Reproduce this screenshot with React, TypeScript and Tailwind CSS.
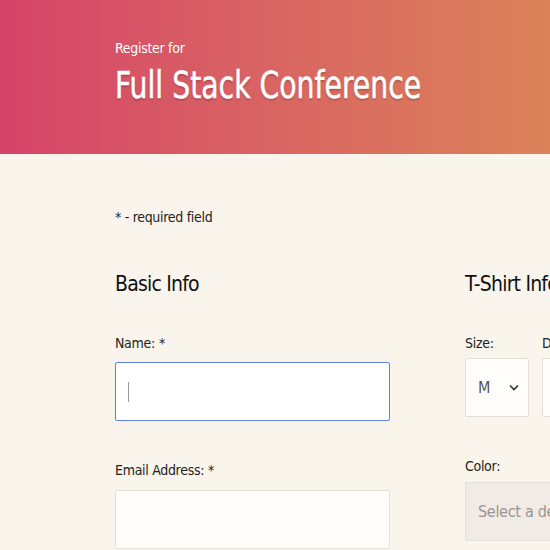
import React from 'react';

const font = "font-['DejaVu_Sans',sans-serif] font-stretch-condensed";

function Field({ label, required, children }: { label: string; required?: boolean; children: React.ReactNode }) {
  return (
    <div className="flex flex-col">
      <label className="whitespace-nowrap text-[14px] leading-[20px] tracking-[-0.3px] text-[#222]">
        {label}
        {required && <span className="ml-1">*</span>}
      </label>
      {children}
    </div>
  );
}

export default function App() {
  return (
    <div className={`h-[550px] w-[550px] overflow-hidden bg-[#faf5ec] ${font}`}>
      {/* ── Header ── */}
      <header className="h-[154px] bg-gradient-to-r from-[#d64269] to-[#da8258] pl-[115px] pt-[38px] text-white">
        <p className="text-[14px] leading-[20px] tracking-[-0.3px]">Register for</p>
        <h1 className="mt-[5px] whitespace-nowrap text-[37px] leading-[46px]">
          <span className="inline-block origin-left scale-x-[0.85] [-webkit-text-stroke:0.5px_white] [text-shadow:0_2px_2px_rgba(0,0,0,0.2)]">
            Full Stack Conference
          </span>
        </h1>
      </header>

      {/* ── Form ── */}
      <main className="w-[800px] pl-[115px] pt-[53px]">
        <p className="text-[14px] leading-[20px] tracking-[-0.3px] text-[#222]">* - required field</p>

        <div className="mt-[42px] grid grid-cols-[275px_300px] gap-x-[75px]">
          {/* Basic info */}
          <section>
            <h2 className="whitespace-nowrap text-[21px] leading-[30px] tracking-[-0.8px] text-[#111]">Basic Info</h2>
            <div className="mt-[34px]">
              <Field label="Name:" required>
                <div className="mt-[9px] flex h-[59px] items-center rounded-[2px] border border-[#5f83e2] bg-white pl-[12px]">
                  <span className="h-[20px] w-px bg-[#9a9a9a]" />
                </div>
              </Field>
            </div>
            <div className="mt-[39px]">
              <Field label="Email Address:" required>
                <div className="mt-[10px] h-[59px] rounded-[2px] border border-[#e4dfd8] bg-[#fffdf9]" />
              </Field>
            </div>
          </section>

          {/* T-shirt info */}
          <section>
            <h2 className="whitespace-nowrap text-[21px] leading-[30px] tracking-[-0.8px] text-[#111]">T-Shirt Info</h2>
            <div className="mt-[34px] flex gap-[13px]">
              <Field label="Size:">
                <div className="mt-[5px] flex h-[59px] w-[64px] items-center justify-between rounded-[2px] border border-[#e4dfd8] bg-[#fffdf9] pl-[12px] pr-[9px] text-[16px] text-[#555]">
                  <span>M</span>
                  <svg width="10" height="7" viewBox="0 0 10 7" fill="none" stroke="#333" strokeWidth="1.6">
                    <path d="M1 1.5l4 4 4-4" />
                  </svg>
                </div>
              </Field>
              <Field label="Design:">
                <div className="mt-[5px] flex h-[59px] w-[200px] items-center rounded-[2px] border border-[#e4dfd8] bg-[#fffdf9] pl-[12px] text-[16px] text-[#555]">
                  <span>Select Theme</span>
                </div>
              </Field>
            </div>
            <div className="mt-[39px]">
              <Field label="Color:">
                <div className="mt-[6px] flex h-[59px] w-[277px] items-center rounded-[2px] border border-[#e4dfd8] bg-[#f1ebe5] pl-[12px] text-[16px] tracking-[-0.3px] text-[#9a9592]">
                  <span className="whitespace-nowrap">Select a design theme above</span>
                </div>
              </Field>
            </div>
          </section>
        </div>
      </main>
    </div>
  );
}
